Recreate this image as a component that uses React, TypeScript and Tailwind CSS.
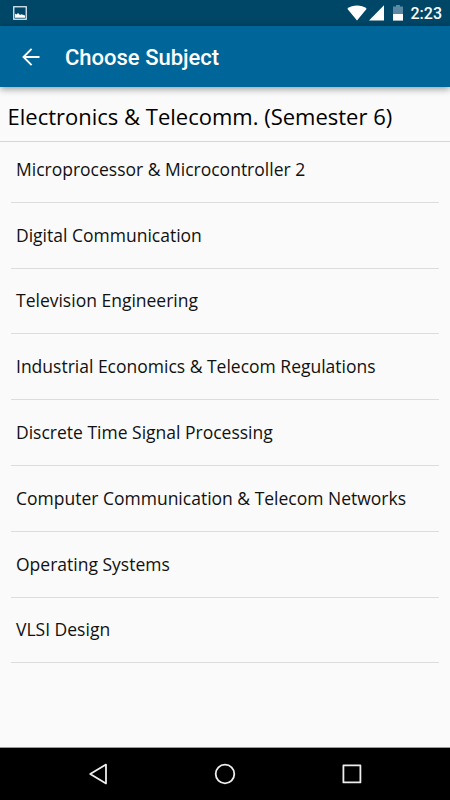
const subjects = [
	"Microprocessor & Microcontroller 2",
	"Digital Communication",
	"Television Engineering",
	"Industrial Economics & Telecom Regulations",
	"Discrete Time Signal Processing",
	"Computer Communication & Telecom Networks",
	"Operating Systems",
	"VLSI Design",
];

function StatusBar() {
	return (
		<div className="flex h-[26px] shrink-0 items-center bg-[#004666] pr-[9px] pl-[13px] text-white">
			<svg width="14" height="14" viewBox="0 0 14 14" fill="none">
				<rect x="0.75" y="0.75" width="12.5" height="12.5" stroke="#dce9f2" strokeWidth="1.3" />
				<path d="M2 11.8V7.5L3.5 8.5L5 7L7 9L8.5 8.3L12 9.5V11.8Z" fill="#fff" />
			</svg>
			<svg className="ml-auto" width="20" height="16" viewBox="0 0 20 16" fill="#fff">
				<path d="M0.3 3.8C5.5 -0.6 14.5 -0.6 19.7 3.8L10 15.6Z" />
			</svg>
			<svg className="ml-[2px]" width="15" height="16" viewBox="0 0 15 16" fill="#fff">
				<path d="M15 0.3V15.6H0Z" />
			</svg>
			<svg className="ml-[9px]" width="10" height="16" viewBox="0 0 10 16">
				<path d="M0 1.5H3V0H7V1.5H10V9H0Z" fill="#5a8aa3" />
				<path d="M0 9H10V15.6H0Z" fill="#fff" />
			</svg>
			<span className="mt-[2px] ml-[8px] -mr-px font-[Roboto,sans-serif] text-[16px] leading-none font-medium">2:23</span>
		</div>
	);
}

function AppBar() {
	return (
		<header className="relative flex h-[61px] shrink-0 items-center bg-[#006699] pl-[22px] text-white shadow-[0_2px_7px_rgba(0,0,0,0.4)]">
			<svg width="18" height="18" viewBox="0 0 18 18" fill="none" stroke="#fff" strokeWidth="1.9">
				<path d="M17.5 9H1.5M9.6 0.9L1.5 9L9.6 17.1" />
			</svg>
			<h1 className="mt-[2px] ml-[25px] font-[Roboto,sans-serif] text-[22px] leading-none font-medium">
				Choose Subject
			</h1>
		</header>
	);
}

function NavBar() {
	return (
		<nav className="flex h-[53px] shrink-0 items-center justify-between border-t border-[#999] bg-black pr-[88px] pl-[88px]">
			<svg width="20" height="22" viewBox="0 0 20 22" fill="none" stroke="#eee" strokeWidth="1.8" strokeLinejoin="round">
				<path d="M18 1.6V20.4L2.2 11Z" />
			</svg>
			<svg width="22" height="22" viewBox="0 0 22 22" fill="none" stroke="#eee" strokeWidth="1.8">
				<circle cx="11" cy="11" r="9.3" />
			</svg>
			<svg width="20" height="20" viewBox="0 0 20 20" fill="none" stroke="#eee" strokeWidth="1.8" strokeLinejoin="round">
				<rect x="1.4" y="1.4" width="17" height="17" />
			</svg>
		</nav>
	);
}

export default function App() {
	return (
		<div className="flex h-[800px] w-[450px] flex-col overflow-hidden bg-[#fafafa] font-['Open_Sans',sans-serif] text-black">
			<StatusBar />
			<AppBar />
			<main className="flex-1">
				<h2 className="flex h-[55px] items-center border-b border-[#d5d5d5] pt-1 pl-[7.5px] text-[22px] whitespace-nowrap">
					Electronics &amp; Telecomm. (Semester 6)
				</h2>
				<ul className="-mt-[5px] px-[11px]">
					{subjects.map((subject) => (
						<li
							key={subject}
							className="flex h-[65.8px] items-center border-b-[1.5px] border-[#dcdcdc] pb-px pl-[5px] text-[17.5px] text-[#111] whitespace-nowrap"
						>
							{subject}
						</li>
					))}
				</ul>
			</main>
			<NavBar />
		</div>
	);
}
